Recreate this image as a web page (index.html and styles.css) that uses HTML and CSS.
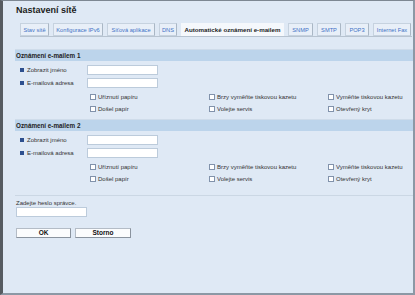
FILE: index.html
```html
<!DOCTYPE html>
<html>
<head>
  <title>Nastavení sítě</title>
  <link rel="stylesheet" href="styles.css">
</head>
<body>
  <div class="frame">
    <h1 class="title">Nastavení sítě</h1>

    <div class="tabs">
      <span class="tab w29">Stav sítě</span>
      <span class="tab w50">Konfigurace IPv6</span>
      <span class="tab w48">Síťová aplikace</span>
      <span class="tab w18">DNS</span>
      <span class="tab active">Automatické oznámení e-mailem</span>
      <span class="tab w25">SNMP</span>
      <span class="tab w24">SMTP</span>
      <span class="tab w24">POP3</span>
      <span class="tab w38">Internet Fax</span>
    </div>

    <div class="section">
      <div class="band">Oznámení e-mailem 1</div>
      <div class="field"><span class="label"><i class="bullet"></i>Zobrazit jméno</span><span class="input"></span></div>
      <div class="field"><span class="label"><i class="bullet"></i>E-mailová adresa</span><span class="input"></span></div>
      <div class="checks">
        <label class="check"><i class="box"></i>Uříznutí papíru</label>
        <label class="check"><i class="box"></i>Brzy vyměňte tiskovou kazetu</label>
        <label class="check"><i class="box"></i>Vyměňte tiskovou kazetu</label>
        <label class="check"><i class="box"></i>Došel papír</label>
        <label class="check"><i class="box"></i>Volejte servis</label>
        <label class="check"><i class="box"></i>Otevřený kryt</label>
      </div>
    </div>

    <div class="section">
      <div class="band">Oznámení e-mailem 2</div>
      <div class="field"><span class="label"><i class="bullet"></i>Zobrazit jméno</span><span class="input"></span></div>
      <div class="field"><span class="label"><i class="bullet"></i>E-mailová adresa</span><span class="input"></span></div>
      <div class="checks">
        <label class="check"><i class="box"></i>Uříznutí papíru</label>
        <label class="check"><i class="box"></i>Brzy vyměňte tiskovou kazetu</label>
        <label class="check"><i class="box"></i>Vyměňte tiskovou kazetu</label>
        <label class="check"><i class="box"></i>Došel papír</label>
        <label class="check"><i class="box"></i>Volejte servis</label>
        <label class="check"><i class="box"></i>Otevřený kryt</label>
      </div>
    </div>

    <div class="admin">
      <div class="admin-label">Zadejte heslo správce.</div>
      <span class="input"></span>
      <div class="buttons">
        <span class="btn">OK</span>
        <span class="btn">Storno</span>
      </div>
    </div>
  </div>
</body>
</html>
```

FILE: styles.css
```css
html, body {
  margin: 0;
  padding: 0;
}
body {
  font-family: "Liberation Sans", Arial, sans-serif;
  font-size: 6px;
  color: #333;
  background: #dfe9f5;
}
.frame {
  box-sizing: border-box;
  height: 295px;
  width: 415px;
  overflow: hidden;
  background: #dfe9f5;
  border-top: 1px solid #7d8792;
  border-left: 3px solid #565b61;
  border-right: 2px solid #8c98a5;
  border-bottom: 2px solid #8c98a5;
  padding-left: 12px;
}
.title {
  margin: 4px 0 0 1px;
  font-size: 9px;
  line-height: 11px;
  font-weight: bold;
  color: #1c1c1c;
}
.tabs {
  display: flex;
  gap: 4px;
  margin: 7px 1px 0 5px;
  height: 13px;
  border-bottom: 1px solid #b7c3d0;
}
.tab {
  box-sizing: border-box;
  flex: none;
  height: 13px;
  line-height: 12px;
  text-align: center;
  background: #e8eff8;
  border: 1px solid #c6d2df;
  border-right-color: #aab7c5;
  color: #3f72c6;
  white-space: nowrap;
  font-size: 5.7px;
}
.w18 { width: 18px; }
.w24 { width: 24px; }
.w25 { width: 25px; }
.w29 { width: 29px; }
.w38 { width: 38px; }
.w48 { width: 48px; }
.w50 { width: 50px; }
.tab.active {
  width: 103px;
  background: #f5f8fc;
  border-color: #f5f8fc;
  color: #1c1c1c;
  font-weight: bold;
  font-size: 6.2px;
}
.section {
  margin-top: 12px;
}
.section + .section {
  margin-top: 5px;
}
.band {
  height: 11px;
  line-height: 11px;
  padding-left: 1px;
  background: #bcd4eb;
  border-top: 1px solid #cfdcea;
  font-weight: bold;
  font-size: 6.3px;
  color: #1c1c1c;
}
.field {
  display: flex;
  align-items: center;
  height: 10px;
  margin-top: 3px;
}
.band + .field {
  margin-top: 4px;
}
.label {
  display: flex;
  align-items: center;
  width: 72px;
  box-sizing: border-box;
  padding-left: 5px;
}
.bullet {
  width: 4px;
  height: 4px;
  background: #2d4f8e;
  margin-right: 3px;
}
.input {
  display: block;
  box-sizing: border-box;
  width: 71px;
  height: 10px;
  background: #fff;
  border: 1px solid #bccbdb;
}
.checks {
  display: grid;
  grid-template-columns: 119px 119px auto;
  row-gap: 1px;
  margin: 3px 0 0 75px;
}
.check {
  display: flex;
  align-items: center;
  height: 11px;
  white-space: nowrap;
}
.box {
  box-sizing: border-box;
  width: 6px;
  height: 6px;
  background: #fff;
  border: 1px solid #8192ab;
  margin-right: 2px;
}
.admin {
  margin-top: 11px;
  padding-top: 3px;
  border-top: 1px solid #cbd7e4;
}
.admin-label {
  height: 8px;
  line-height: 8px;
  padding-left: 1px;
}
.admin .input {
  margin-left: 1px;
}
.buttons {
  display: flex;
  gap: 4px;
  margin: 11px 0 0 1px;
}
.btn {
  box-sizing: border-box;
  width: 55px;
  height: 10px;
  line-height: 8px;
  text-align: center;
  background: #fbfcfd;
  border: 1px solid #b4bcc6;
  border-bottom-color: #8a939e;
  border-right-color: #8a939e;
  font-weight: bold;
  font-size: 6.5px;
  color: #111;
}
.btn + .btn {
  width: 56px;
}
```
